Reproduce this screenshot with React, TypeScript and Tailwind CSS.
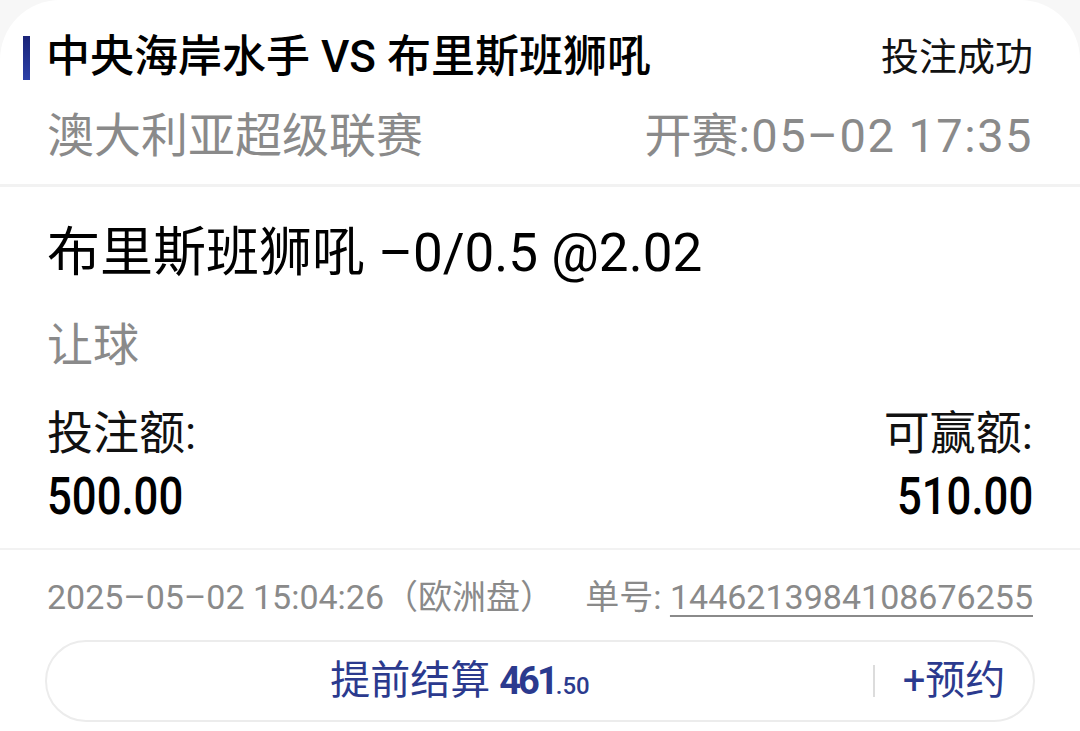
export default function App() {
    return (
        <div className="w-[1080px] h-[731px] overflow-hidden bg-[#f7f7f7] font-[family-name:Roboto,'Noto_Sans_CJK_SC',sans-serif]">
            <div className="h-full bg-white rounded-t-[60px] flex flex-col">
                {/* Match header */}
                <div className="pt-[30px] pb-[20px]">
                    <div className="flex items-center justify-between pl-[23px] pr-[47px] h-[55px]">
                        <div className="flex items-center gap-[16px]">
                            <div className="w-[7px] h-[44px] bg-gradient-to-b from-[#1a2478] to-[#2c40a8]" />
                            <span className="text-[44px] leading-[55px] font-medium text-black">
                                中央海岸水手 VS 布里斯班狮吼
                            </span>
                        </div>
                        <span className="text-[38px] leading-[55px] text-[#111]">投注成功</span>
                    </div>
                    <div className="mt-[23px] flex items-center justify-between px-[47px] h-[56px] text-[47px] leading-[56px] text-[#8a8a8a]">
                        <span>澳大利亚超级联赛</span>
                        <span>
                            开赛<span className="tracking-[1.5px]">:05–02 17:35</span>
                        </span>
                    </div>
                </div>
                <div className="h-[3px] bg-[#f2f2f2]" />

                {/* Bet detail */}
                <div className="px-[47px] pt-[34px] pb-[23px] flex flex-col">
                    <div className="h-[64px] text-[53px] leading-[64px] text-black">布里斯班狮吼 –0/0.5 @2.02</div>
                    <div className="mt-[32px] h-[56px] text-[46px] leading-[56px] text-[#8a8a8a]">让球</div>
                    <div className="mt-[35px] flex justify-between">
                        <div className="flex flex-col">
                            <span className="h-[50px] text-[46px] leading-[50px] text-[#111]">投注额:</span>
                            <span className="mt-[11px] h-[56px] text-[52px] leading-[56px] font-medium text-black inline-block origin-left scale-x-[0.84]">
                                500.00
                            </span>
                        </div>
                        <div className="flex flex-col items-end">
                            <span className="h-[50px] text-[46px] leading-[50px] text-[#111]">可赢额:</span>
                            <span className="mt-[11px] h-[56px] text-[52px] leading-[56px] font-medium text-black inline-block origin-right scale-x-[0.84]">
                                510.00
                            </span>
                        </div>
                    </div>
                </div>
                <div className="h-[2px] bg-[#f2f2f2]" />

                {/* Footer */}
                <div className="px-[45px] pt-[27px]">
                    <div className="flex items-center justify-between px-[2px] h-[40px] text-[34px] leading-[40px] text-[#8a8a8a]">
                        <span>2025–05–02 15:04:26（欧洲盘）</span>
                        <span>
                            单号: <span className="underline underline-offset-[6px] decoration-[2px]">1446213984108676255</span>
                        </span>
                    </div>
                    <div className="mt-[23px] h-[82px] rounded-full border-2 border-[#ececec] flex items-center text-[#2b3a8e]">
                        <div className="flex-1 flex items-baseline justify-center">
                            <span className="text-[40px]">提前结算</span>
                            <span className="ml-[9px] text-[38px] font-bold tracking-[-3px]">461</span>
                            <span className="text-[24px] font-medium">.50</span>
                        </div>
                        <div className="w-[2px] h-[32px] bg-[#dcdcdc]" />
                        <div className="w-[158px] flex justify-center items-center text-[40px]">
                            <span>+预约</span>
                        </div>
                    </div>
                </div>
            </div>
        </div>
    );
}
